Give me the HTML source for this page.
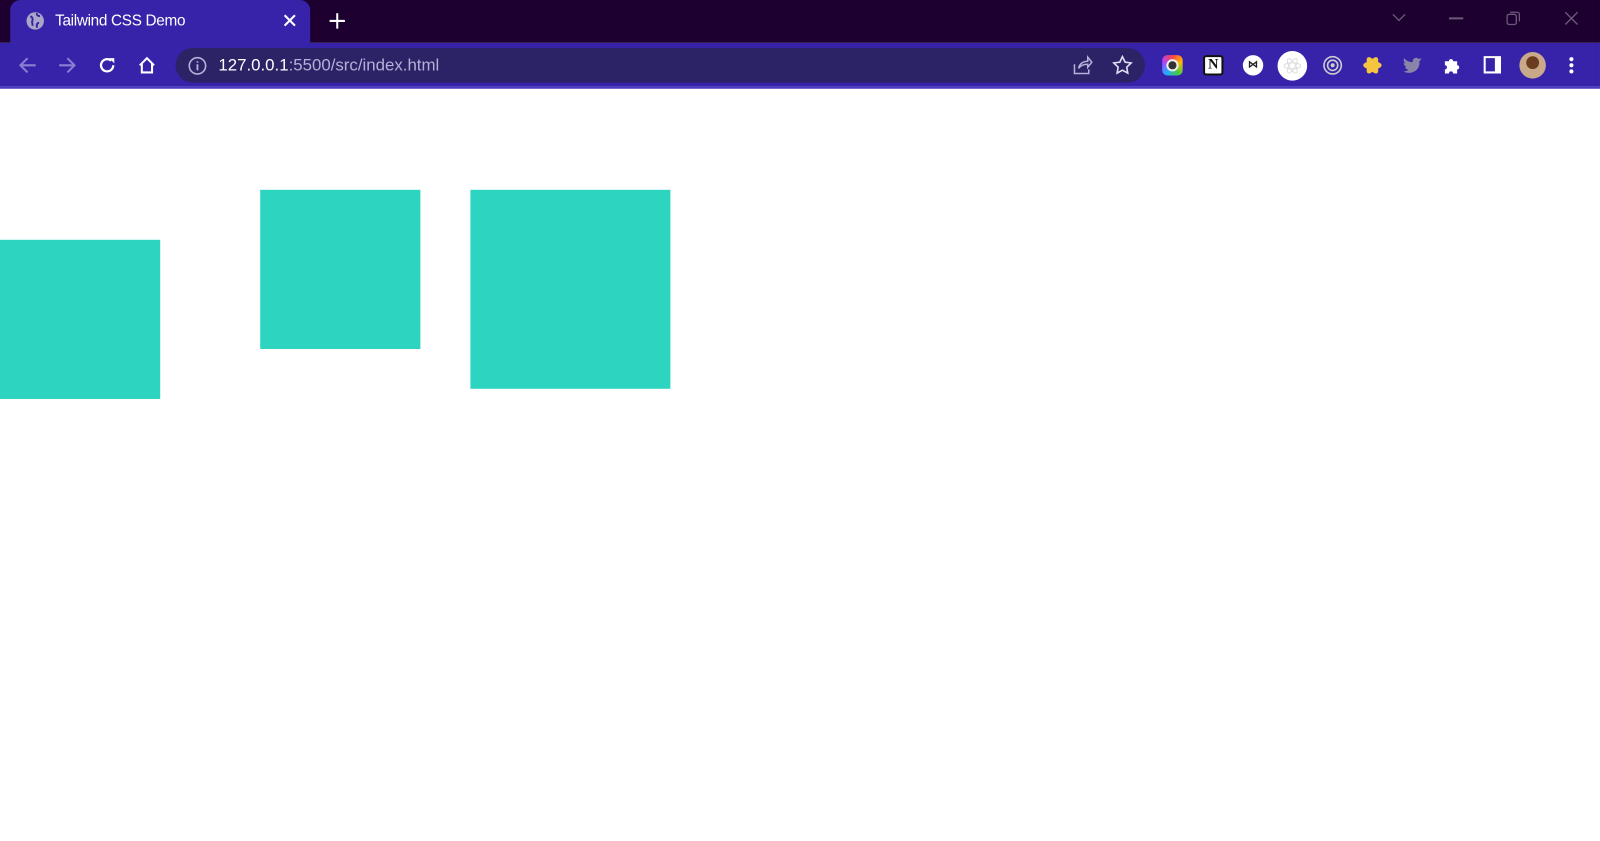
<!DOCTYPE html>
<html><head><meta charset="utf-8"><style>
*{margin:0;padding:0;box-sizing:border-box}
html,body{width:1600px;height:840px;background:#fff;overflow:hidden}
body{font-family:"Liberation Sans",sans-serif}
#s{position:absolute;left:0;top:0;width:1568px;height:824px;transform:scale(1.0204);transform-origin:0 0}
.top{position:absolute;left:0;top:0;width:1568px;height:42px;background:#1e0030}
.tab{position:absolute;left:10px;top:0;width:294px;height:42px;background:#3623aa;border-radius:10px 10px 0 0}
.tab .t{position:absolute;left:44px;top:12px;color:#fff;font-size:15px;letter-spacing:-0.3px}
.bar{position:absolute;left:0;top:42px;width:1568px;height:43px;background:#3623aa}
.line{position:absolute;left:0;top:85px;width:1568px;height:2px;background:#4a3cc0}
.omni{position:absolute;left:172px;top:47px;width:950px;height:34px;border-radius:17px;background:#2b2366}
.url{position:absolute;left:214px;top:55px;font-size:16.5px;color:#fff}
.url span{color:#b4b0d8}
.ic{position:absolute}
.sq{position:absolute;background:#2dd4bf}
</style></head><body><div id="s">
<div class="top"></div>
<div class="tab">
<svg class="ic" style="left:15px;top:11px" width="19" height="19" viewBox="0 0 20 20"><circle cx="10" cy="10" r="9" fill="#a9a6c8"/><path d="M5 5c2 1 3 3 2 5s1 3 0 5M12 2c-1 2 1 3 3 3M14 12c-2 0-3 2-2 5" stroke="#3623aa" stroke-width="2" fill="none"/></svg>
<div class="t">Tailwind CSS Demo</div>
<svg class="ic" style="left:268px;top:14px" width="12" height="12" viewBox="0 0 13 13"><path d="M1 1L12 12M12 1L1 12" stroke="#fff" stroke-width="2.2"/></svg>
</div>
<svg class="ic" style="left:322px;top:12px" width="17" height="17" viewBox="0 0 17 17"><path d="M8.5 1v15M1 8.5h15" stroke="#fff" stroke-width="2"/></svg>
<svg class="ic" style="left:1364px;top:13px" width="14" height="9" viewBox="0 0 14 9"><path d="M1 1l6 6 6-6" stroke="#6a5a7a" stroke-width="1.3" fill="none"/></svg>
<div class="ic" style="left:1420px;top:17px;width:14px;height:1.5px;background:#6a5a7a"></div>
<svg class="ic" style="left:1476px;top:11px" width="14" height="14" viewBox="0 0 14 14"><rect x="1" y="3" width="9" height="10" rx="2" stroke="#6a5a7a" fill="none" stroke-width="1.3"/><path d="M4 1h7a2 2 0 0 1 2 2v7" stroke="#6a5a7a" fill="none" stroke-width="1.3"/></svg>
<svg class="ic" style="left:1533px;top:11px" width="14" height="14" viewBox="0 0 14 14"><path d="M1 1l12 12M13 1L1 13" stroke="#6a5a7a" stroke-width="1.3"/></svg>
<div class="bar"></div><div class="line"></div>
<svg class="ic" style="left:18px;top:55px" width="18" height="18" viewBox="0 0 18 18"><path d="M17 9H2M9 2L2 9l7 7" stroke="#8a7fd0" stroke-width="2" fill="none"/></svg>
<svg class="ic" style="left:57px;top:55px" width="18" height="18" viewBox="0 0 18 18"><path d="M1 9h15M9 2l7 7-7 7" stroke="#8a7fd0" stroke-width="2" fill="none"/></svg>
<svg class="ic" style="left:96px;top:55px" width="18" height="18" viewBox="0 0 18 18"><path d="M15 9a6 6 0 1 1-2-4.5" stroke="#fff" stroke-width="2.2" fill="none"/><path d="M11 2h5v5z" fill="#fff"/></svg>
<svg class="ic" style="left:135px;top:55px" width="18" height="18" viewBox="0 0 18 18"><path d="M2 9L9 2l7 7M4 7v9h10V7" stroke="#fff" stroke-width="2" fill="none"/></svg>
<div class="omni"></div>
<svg class="ic" style="left:184px;top:55px" width="19" height="19" viewBox="0 0 19 19"><circle cx="9.5" cy="9.5" r="8" stroke="#b4b0d8" stroke-width="1.6" fill="none"/><path d="M9.5 8v6M9.5 5v1.5" stroke="#b4b0d8" stroke-width="1.8"/></svg>
<div class="url">127.0.0.1<span>:5500/src/index.html</span></div>
<svg class="ic" style="left:1051px;top:54px" width="20" height="20" viewBox="0 0 20 20"><path d="M2 9v9h14v-4M6 13c1-5 5-7 9-7V2l4 5-4 5V9c-4 0-7 1-9 4z" stroke="#b4b0d8" stroke-width="1.5" fill="none"/></svg>
<svg class="ic" style="left:1090px;top:54px" width="20" height="20" viewBox="0 0 20 20"><path d="M10 1.5l2.6 5.4 5.9.8-4.3 4.1 1 5.8L10 14.8l-5.2 2.8 1-5.8L1.5 7.7l5.9-.8z" stroke="#e0ddf5" stroke-width="1.6" fill="none"/></svg>
<div class="ic" style="left:1139px;top:54px;width:20px;height:20px;border-radius:5px;background:conic-gradient(#f44,#fb0,#4c4,#2af,#a4f,#f44)"></div>
<div class="ic" style="left:1143px;top:58px;width:12px;height:12px;border-radius:50%;background:#333;border:2px solid #eee"></div>
<div class="ic" style="left:1179px;top:54px;width:20px;height:20px;background:#fff;border:2px solid #111;border-radius:3px;font:bold 14px 'Liberation Serif',serif;text-align:center;line-height:16px;color:#111">N</div>
<div class="ic" style="left:1218px;top:54px;width:20px;height:20px;border-radius:50%;background:#fff;font:bold 10px 'Liberation Sans';text-align:center;line-height:20px;color:#222">⋈</div>
<div class="ic" style="left:1252px;top:50px;width:29px;height:29px;border-radius:50%;background:#fff"></div>
<svg class="ic" style="left:1257px;top:55px" width="19" height="19" viewBox="0 0 19 19"><g stroke="#ddd" fill="none"><ellipse cx="9.5" cy="9.5" rx="8" ry="3"/><ellipse cx="9.5" cy="9.5" rx="8" ry="3" transform="rotate(60 9.5 9.5)"/><ellipse cx="9.5" cy="9.5" rx="8" ry="3" transform="rotate(120 9.5 9.5)"/></g></svg>
<svg class="ic" style="left:1296px;top:54px" width="20" height="20" viewBox="0 0 20 20"><circle cx="10" cy="10" r="8.5" stroke="#ccc" stroke-width="1.6" fill="none"/><circle cx="10" cy="10" r="5" stroke="#ccc" stroke-width="1.6" fill="none"/><circle cx="10" cy="10" r="2" fill="#ccc"/></svg>
<svg class="ic" style="left:1335px;top:54px" width="20" height="20" viewBox="0 0 20 20"><g fill="#f5c542"><ellipse cx="10" cy="10" rx="9" ry="4"/><ellipse cx="10" cy="10" rx="9" ry="4" transform="rotate(60 10 10)"/><ellipse cx="10" cy="10" rx="9" ry="4" transform="rotate(120 10 10)"/></g></svg>
<svg class="ic" style="left:1374px;top:55px" width="20" height="18" viewBox="0 0 20 18"><path d="M19 2c-1 .5-2 .7-2.5.8A3.5 3.5 0 0 0 10.5 6C7 6 4 4.5 2 2c-1 2 0 4 1.5 5-1 0-1.5-.3-2-.5 0 2 1.5 3.5 3 4-.5.2-1.2.2-1.7 0 .5 1.5 2 2.7 3.5 2.7A7 7 0 0 1 1 15c8 4 17-1 16-10 1-.7 1.5-1.5 2-3z" fill="#8a84a8"/></svg>
<svg class="ic" style="left:1413px;top:54px" width="20" height="20" viewBox="0 0 20 20"><path d="M3 6h4a2 2 0 1 1 4 0h4v4a2 2 0 1 1 0 4v4h-4a2 2 0 1 0-4 0H3v-4a2 2 0 1 0 0-4z" fill="#fff"/></svg>
<div class="ic" style="left:1454px;top:55px;width:17px;height:17px;border:2px solid #fff;border-right-width:6px;background:#3623aa"></div>
<div class="ic" style="left:1489px;top:51px;width:26px;height:26px;border-radius:50%;background:radial-gradient(circle at 50% 40%,#6b3d1f 30%,#c9a98a 32%)"></div>
<svg class="ic" style="left:1536px;top:55px" width="8" height="18" viewBox="0 0 8 18"><g fill="#fff"><circle cx="4" cy="3" r="2"/><circle cx="4" cy="9" r="2"/><circle cx="4" cy="15" r="2"/></g></svg>
<div class="sq" style="left:0;top:235px;width:157px;height:156px"></div>
<div class="sq" style="left:255px;top:186px;width:157px;height:156px"></div>
<div class="sq" style="left:461px;top:186px;width:196px;height:195px"></div>
</div></body></html>
